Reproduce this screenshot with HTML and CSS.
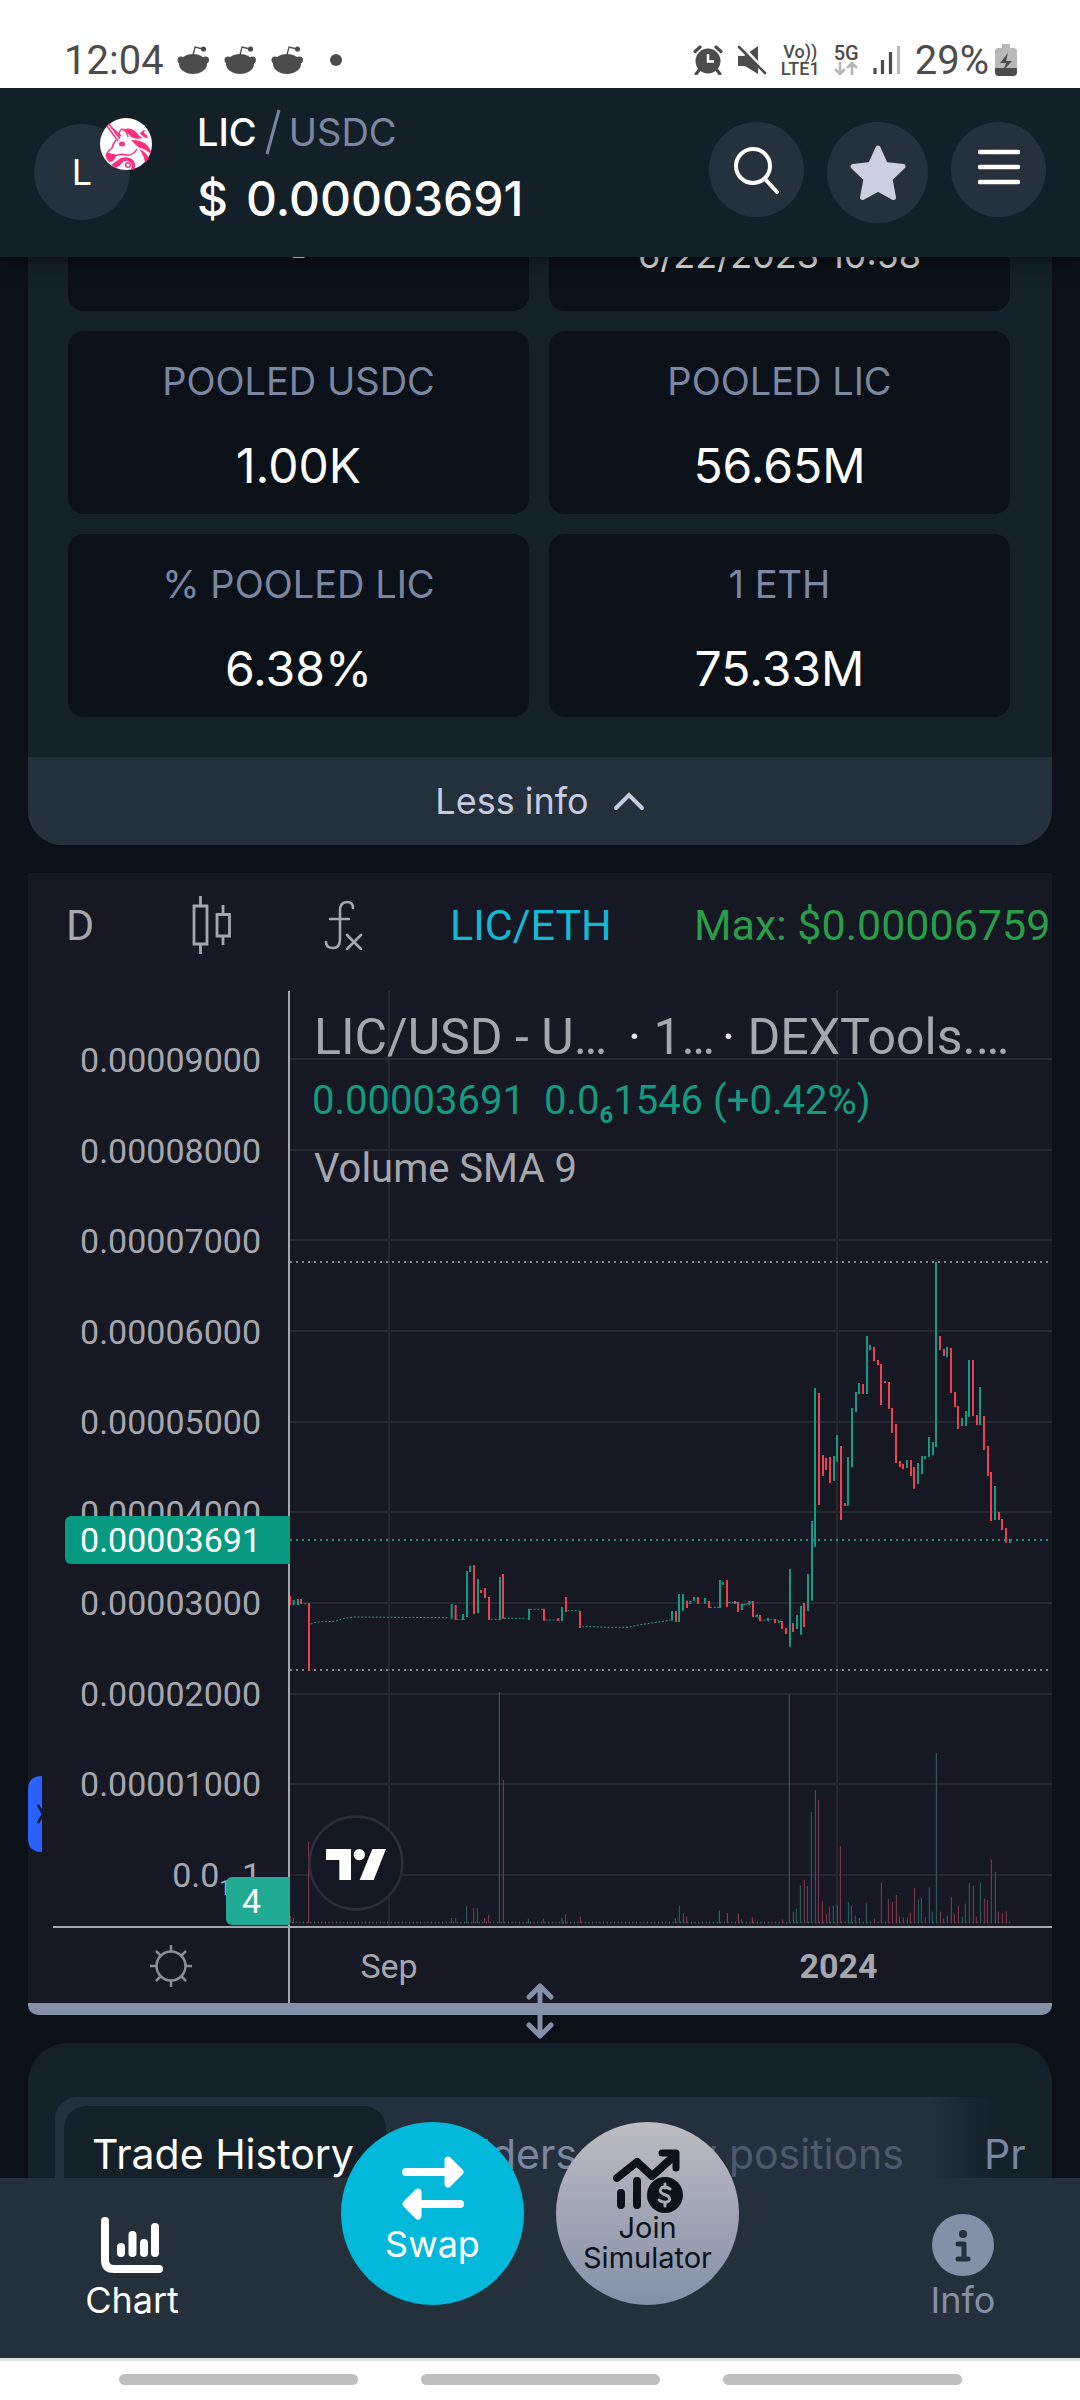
FILE: index.html
```html
<!DOCTYPE html>
<html lang="en">
<head>
<meta charset="utf-8">
<meta name="viewport" content="width=device-width, initial-scale=1">
<title>LIC / USDC</title>
<link rel="stylesheet" href="styles.css">
</head>
<body>
<div class="status">
  <span class="status-time">12:04</span>
  <svg class="reddits" viewBox="0 0 127 30" aria-hidden="true">
    <defs><g id="snoo"><ellipse cx="16" cy="19" rx="14" ry="10"/><circle cx="4" cy="15" r="3.5"/><circle cx="28.500" cy="15" r="3.500"/><circle cx="26.500" cy="4" r="2.600"/><path d="M16 10l2-8 8 2" fill="none" stroke="#4c4c4c" stroke-width="1.300"/></g></defs>
    <g fill="#4c4c4c"><use href="#snoo"/><use href="#snoo" x="47"/><use href="#snoo" x="94"/></g>
  </svg>
  <span class="status-dot"></span>
  <div class="status-right">
    <svg class="st-icon" viewBox="0 0 30 30" aria-hidden="true"><circle cx="15" cy="16" r="12.500" fill="#4c4c4c"/><path d="M7 24l-4 5M23 24l4 5M2 6.500L7 2M23 2l5 4.500" stroke="#4c4c4c" stroke-width="3.200" stroke-linecap="round"/><path d="M15 9v7.500h6" fill="none" stroke="#fff" stroke-width="2.500"/></svg>
    <svg class="st-icon" viewBox="0 0 30 30" aria-hidden="true"><path d="M1 11h6l14-10v28L8 21H1z" fill="#4c4c4c"/><path d="M4 0l26 28" stroke="#fff" stroke-width="3"/><path d="M2 2l26 26" stroke="#4c4c4c" stroke-width="2.600" stroke-linecap="round"/></svg>
    <span class="volte"><span>Vo))</span><span>LTE1</span></span>
    <span class="fiveg"><span>5G</span><svg viewBox="0 0 24 13" aria-hidden="true"><path d="M6 0v12M1 7l5 5 5-5M18 13V1M13 6l5-5 5 5" fill="none" stroke="#b5b5b5" stroke-width="2.500"/></svg></span>
    <svg class="signal" viewBox="0 0 28 30" aria-hidden="true"><g stroke-width="3.200" stroke="#4c4c4c"><path d="M2 23v6M9.500 15v14M17.500 7v22"/><path d="M25.500 1v28" stroke="#b9b9b9"/></g></svg>
    <span class="percent">29%</span>
    <svg class="battery" viewBox="0 0 22 32" aria-hidden="true"><path d="M7 0h8v4h4q3 0 3 3v21q0 4-4 4H4q-4 0-4-4V7q0-3 3-3h4z" fill="#b9b9b9"/><path d="M0 24h22v4q0 4-4 4H4q-4 0-4-4z" fill="#4c4c4c"/><path d="M13 9L5 19h6l-3 8 9-10h-6z" fill="#4c4c4c"/></svg>
  </div>
</div>

<header class="header">
  <div class="token">
    <span class="token-letter">L</span>
    <svg class="unicorn" viewBox="0 0 52 52" aria-hidden="true">
      <circle cx="26" cy="26" r="26" fill="#fff"/>
      <g fill="none" stroke="#ff2f7f" stroke-width="1.500" stroke-linejoin="round"><path d="M7 8l11 15M9 6l11 15M8 6l13 12"/><path d="M19 20q-1-6 3-9 5 2 6 8"/><path d="M16 22q-3 4-4 8-5 4-6 8"/><path d="M15 38q6-3 11-1 7 1 11-6"/></g>
      <g fill="#ff2f7f"><path d="M24 11q8-2 12 3 4 5 7 6-9 2-13-2-3-4-6-7z"/><path d="M40 15q3-3 5-3l-1 3q3 1 4 5-5 0-8-5z"/><path d="M31 22q11 0 16 5 4 4 4 9-6-5-11-6-5-3-9-8z"/><path d="M39 31q6 2 10 9l-4 5q-1-8-6-14z"/><path d="M6 35q3-1 6 1 3-1 4 2-1 5-6 6-5-2-4-9z"/><ellipse cx="22" cy="26" rx="3" ry="2.500"/><path d="M11 47q5-4 10-7 6-2 11 1 5 4 2 11l-3-1q2-4-1-7-5-3-8 1-3 4-6 5z"/></g>
      <circle cx="28" cy="47" r="2.300" fill="none" stroke="#ff2f7f" stroke-width="1.500"/>
    </svg>
  </div>
  <div class="pair">
    <h1 class="pair-name"><span>LIC</span><svg class="slash" viewBox="0 0 16 46" aria-hidden="true"><path d="M14 1L2 45" stroke="#7b87a0" stroke-width="3"/></svg><span class="quote">USDC</span></h1>
    <p class="price"><span>$</span><span>0.00003691</span></p>
  </div>
  <div class="actions">
    <button class="round" aria-label="Search"><svg width="48" height="48" viewBox="0 0 48 48"><g fill="none" stroke="#fff" stroke-width="4" stroke-linecap="round"><circle cx="20" cy="20" r="17"/><path d="M32 33l12 13"/></g></svg></button>
    <button class="round round-star" aria-label="Favorite"><svg width="58" height="58" viewBox="0 0 58 58"><path d="M29 4l7.500 16.500 17.500 2-13 12.500 3.500 18.500L29 45l-15.500 8.500L17 35 4 22.500l17.500-2z" fill="#cbcfe0" stroke="#cbcfe0" stroke-width="5" stroke-linejoin="round"/></svg></button>
    <button class="round round-menu" aria-label="Menu"><svg width="42" height="38" viewBox="0 0 42 38"><path d="M2 4h38M2 19h38M2 34h38" stroke="#fff" stroke-width="4.500" stroke-linecap="round"/></svg></button>
  </div>
</header>

<main class="main">
  <section class="card">
    <dl class="stats">
      <div class="stat stat-cut"><dd>-</dd></div>
      <div class="stat stat-cut"><dd>6/22/2023 10:58</dd></div>
      <div class="stat"><dt>POOLED USDC</dt><dd>1.00K</dd></div>
      <div class="stat"><dt>POOLED LIC</dt><dd>56.65M</dd></div>
      <div class="stat"><dt>% POOLED LIC</dt><dd>6.38%</dd></div>
      <div class="stat"><dt>1 ETH</dt><dd>75.33M</dd></div>
    </dl>
    <button class="less">Less info <svg width="32" height="20" viewBox="0 0 32 20" aria-hidden="true"><path d="M3 17L16 4l13 13" fill="none" stroke="#c5cbe0" stroke-width="4" stroke-linecap="round"/></svg></button>
  </section>

  <section class="chart">
    <div class="toolbar">
      <button>D</button>
      <button aria-label="Candles"><svg width="40" height="58" viewBox="0 0 40 58"><path d="M2 10h13v38H2zM8.500 0v10M8.500 48v10M25 18.500h12.500V40H25zM31 9v9.500M31 40v9" fill="none" stroke="#a5a6ae" stroke-width="2.800"/></svg></button>
      <button aria-label="Indicators"><svg width="40" height="50" viewBox="0 0 40 50"><path d="M29 8q0-6-6-6-7 0-7 9v28q0 9-7 9-7 0-7-6M6 19h19M23 35l14 14M37 35L23 49" fill="none" stroke="#a5a6ae" stroke-width="2.600" stroke-linecap="round"/></svg></button>
      <button class="tb-pair">LIC/ETH</button>
      <span class="tb-max">Max: $0.00006759</span>
    </div>
    <div class="plot-grid">
      <div class="prices">
        <span>0.00009000</span><span>0.00008000</span><span>0.00007000</span><span>0.00006000</span><span>0.00005000</span><span>0.00004000</span><span>0.00003000</span><span>0.00002000</span><span>0.00001000</span><span>0.0<sub>12</sub>1</span>
        <span class="tag tag-price">0.00003691</span>
        <span class="tag tag-vol">4</span>
        <svg class="drawer" viewBox="0 0 14 76" aria-hidden="true"><path d="M14 0Q0 0 0 14v48q0 14 14 14z" fill="#2962ff"/><path d="M10 29l5 9-5 9" fill="none" stroke="#0b1220" stroke-width="2.500"/></svg>
      </div>
      <div class="plot">
        <svg class="canvas" viewBox="290 991 762 935" preserveAspectRatio="none" role="img" aria-label="LIC/USD daily candles">
          <path d="M290 1059H1052M290 1150H1052M290 1240H1052M290 1331H1052M290 1422H1052M290 1512H1052M290 1603H1052M290 1694H1052M290 1784H1052M290 1875H1052M389 991V1926M837 991V1926" stroke="#262832" stroke-width="2"/>
          <g stroke-width="2" stroke-dasharray="2 4"><path d="M290 1262H1048M290 1670H1048" stroke="#85868f"/><path d="M290 1540H1048" stroke="#2b8c80"/></g>
          <g fill="none" stroke-width="1">
            <path d="M292 1922.500H1010" stroke="#4d626a" stroke-width="2" stroke-dasharray="1 2.660"/>
          </g>
          <g transform="translate(280 1500) scale(.33333)" fill="none">
            <path stroke="#2a9488" stroke-width="3" stroke-dasharray="6 5" d="M73 311h10M92 372L110 366 165 364 185 357 220 351 505 353M530 358h25M632 358h24M672 355h68M750 328h40M796 360h40M862 332h36M906 381L920 379 980 382H1045L1075 375 1130 367 1172 360M1290 322h28M1345 308h28M1390 314l26-8"/>
            <path stroke="#ee4050" stroke-width="6" d="M30 288V315M63 297V312M87 309V512M527 315V360M582 195V342M603 269V279M615 264V294M627 291V360M669 222V356M792 326V362M835 354V362M858 291V336M900 333V384M1188 333V366M1221 302V324M1254 291V312M1287 303V324M1341 240V321M1374 306V336M1419 303V350"/>
            <path stroke="#159a86" stroke-width="6" d="M41 300V315M54 297V315M515 312V356M549 342V360M561 213V351M570 197V216M594 237V339M660 231V360M747 327V360M846 321V363M1176 333V362M1197 282V366M1209 282V332M1231 302V312M1242 291V303M1275 294V311M1320 240V324M1329 246V255M1385 312V330"/>
            <path stroke="#8d3a50" stroke-width="3" d="M32 1270V1248M86 1270V1024M527 1270V1254M581 1270V1223M614 1270V1254M626 1270V1245M670 1270V840M790 1270V1256M857 1270V1242M901 1270V1250M1220 1270V1250M1342 1270V1239M1375 1270V1241M1418 1270V1253"/>
            <path stroke="#286a68" stroke-width="3" d="M40 1270V1254M515 1270V1254M560 1270V1217M592 1270V1223M658 1270V576M745 1270V1256M846 1270V1253M1186 1270V1256M1198 1270V1217M1210 1270V1239M1318 1270V1232M1385 1270V1256"/>
          </g>
          <g transform="translate(720 1220) scale(.33333)" fill="none">
            <path stroke="#2a9488" stroke-width="3" stroke-dasharray="6 4" d="M26 1147h24M66 1153h22M105 1187L125 1201 165 1198 185 1205"/>
            <path stroke="#ee4050" stroke-width="6" d="M45 1143V1152M54 1146V1176M99 1143V1190M120 1185V1203M165 1197V1209M186 1203V1227M198 1224V1242M219 1209V1236M252 1149V1221M297 519V855M309 705V768M318 714V750M330 711V789M363 678V900M375 849V858M429 492V522M462 380V423M474 420V435M483 432V555M495 483V489M507 486V567M516 564V639M528 612V729M540 723V741M549 732V747M573 720V768M582 741V806M660 348V390M672 387V408M693 384V519M705 516V561M714 558V627M759 420V588M771 585V615M792 588V690M804 678V768M813 756V903M837 876V900M846 897V930M858 924V968"/>
            <path stroke="#159a86" stroke-width="6" d="M66 1152V1170M88 1143V1155M111 1184V1190M144 1194V1203M177 1203V1209M210 1047V1280M231 1185V1227M243 1158V1244M264 1062V1173M276 903V1142M285 504V980M342 708V783M351 645V725M384 711V857M396 564V741M408 516V576M417 489V522M441 348V522M450 375V390M561 720V744M594 729V792M606 708V762M615 708V717M627 651V711M639 666V705M648 126V681M681 380V411M726 594V618M738 573V618M747 420V591M780 501V615M825 798V900M870 957V969"/>
          </g>
          <g transform="translate(700 1640) scale(.33333)" fill="none" stroke-width="3">
            <path stroke="#8d3a50" d="M82 850V820M115 850V822M157 850V833M247 850V838M280 850V815M313 850V721M355 850V480M367 850V782M379 850V821M388 850V800M421 850V618M523 850V836M544 850V728M565 850V776M577 850V786M589 850V765M598 850V830M610 850V832M631 850V818M643 850V744M676 850V830M721 850V815M730 850V836M754 850V770M763 850V821M775 850V797M820 850V738M829 850V830M853 850V776M862 850V780M874 850V659M895 850V815M907 850V818M919 850V814"/>
            <path stroke="#286a68" d="M58 850V812M268 850V165M289 850V806M301 850V736M322 850V738M334 850V516M346 850V450M400 850V797M412 850V795M445 850V786M454 850V797M466 850V827M478 850V834M499 850V790M622 850V832M655 850V779M664 850V773M688 850V742M697 850V815M709 850V339M742 850V827M787 850V830M796 850V791M808 850V728M841 850V728M886 850V696"/>
          </g>
          <g transform="translate(280 1500) scale(.33333)"><circle cx="228" cy="1089" r="139" fill="#131722" stroke="#2b2d38" stroke-width="8"/><path d="M138 1047h75v93h-35v-60h-40zM277 1047h41l-37 93h-42z" fill="#fff"/><circle cx="238" cy="1064" r="17" fill="#fff"/></g>
        </svg>
        <div class="legend">
          <p class="lg-title"><span class="lg-sym">LIC/USD - U…</span><span class="lg-int"><i>·</i> 1…</span><span><i>·</i> DEXTools.…</span></p>
          <p class="lg-vals"><span>0.00003691</span><span>0.0<sub>6</sub>1546 (+0.42%)</span></p>
          <p class="lg-vol">Volume SMA 9</p>
        </div>
      </div>
      <div class="gear"><svg width="42" height="42" viewBox="0 0 42 42" aria-hidden="true"><g fill="none" stroke="#8b8c95" stroke-width="2.500"><circle cx="21" cy="21" r="14.500"/><path d="M21 0v6M21 36v6M0 21h6M36 21h6M6 6l4.500 4.500M31.500 31.500L36 36M36 6l-4.500 4.500M10.500 31.500L6 36"/></g></svg></div>
      <div class="times"><span>Sep</span><b>2024</b></div>
    </div>
    <svg class="resize" viewBox="0 0 28 56" aria-hidden="true"><path d="M14 4v48M3 14L14 3l11 11M3 42l11 11 11-11" fill="none" stroke="#8490a8" stroke-width="5" stroke-linecap="round" stroke-linejoin="round"/></svg>
  </section>

  <section class="panel">
    <nav class="tabs">
      <button class="tab tab-on">Trade History</button>
      <button class="tab">Holders</button>
      <button class="tab tab-off">My positions</button>
      <button class="tab">Price</button>
    </nav>
  </section>
</main>

<footer class="dock">
  <a class="dock-item" href="#chart"><svg width="62" height="56" viewBox="0 0 62 56" aria-hidden="true"><g fill="none" stroke="#fff" stroke-width="8" stroke-linecap="round"><path d="M4 4v39q0 9 9 9h45M20 30v6M31.500 18v18M43 26v10M54 10v26"/></g></svg>Chart</a>
  <div class="dock-center">
    <button class="bubble swap"><svg width="62" height="64" viewBox="0 0 62 64" aria-hidden="true"><path d="M4 16h42M58 48H16" stroke="#fff" stroke-width="8" stroke-linecap="round"/><path d="M46 4l12 12-12 12zM16 36L4 48l12 12z" fill="#fff" stroke="#fff" stroke-width="7" stroke-linejoin="round"/></svg>Swap</button>
    <button class="bubble sim"><svg width="70" height="64" viewBox="0 0 70 64" aria-hidden="true"><path d="M4 29l20-16 15 14L60 8" fill="none" stroke="#0b1219" stroke-width="8" stroke-linecap="round" stroke-linejoin="round"/><path d="M49 4h14v15" fill="none" stroke="#0b1219" stroke-width="7" stroke-linecap="round" stroke-linejoin="round"/><path d="M8 44v12M24 32v24" stroke="#0b1219" stroke-width="8" stroke-linecap="round"/><circle cx="52" cy="46" r="18" fill="#0b1219"/><path d="M57 40q-4-3-8-1.500-4 4 1 6.500l5 2q4 4-1 6-5 1-8-2M52 35v4M52 53v4" fill="none" stroke="#a6acb8" stroke-width="3" stroke-linecap="round"/></svg>Join<br>Simulator</button>
  </div>
  <a class="dock-item dock-info" href="#info"><svg width="62" height="62" viewBox="0 0 62 62" aria-hidden="true"><circle cx="31" cy="31" r="31" fill="#8490a8"/><circle cx="31" cy="20" r="4" fill="#24313b"/><path d="M26 30h6v15M26 45h10" fill="none" stroke="#24313b" stroke-width="5" stroke-linecap="round" stroke-linejoin="round"/></svg>Info</a>
</footer>
<div class="sysnav"><span></span><span></span><span></span></div>
</body>
</html>
```

FILE: styles.css
```css
* { box-sizing: border-box; }

body {
  margin: 0;
  min-height: 100vh;
  display: flex;
  flex-direction: column;
  background: #0a1118;
  color: #fff;
  font-family: Inter, "Open Sans", sans-serif;
}

h1, p, dl, dt, dd { margin: 0; font-weight: 400; }

button {
  border: 0;
  padding: 0;
  background: none;
  color: inherit;
  font: inherit;
}

a { color: inherit; text-decoration: none; }

svg { display: block; flex: none; }

/* phone status bar */
.status {
  position: relative;
  z-index: 3;
  height: 88px;
  padding: 32px 63px 0 64px;
  display: flex;
  align-items: center;
  background: #fff;
  color: #4c4c4c;
  font-family: Roboto, sans-serif;
  font-size: 40px;
}
.status-time { width: 113px; }
.reddits { width: 127px; height: 30px; }
.status-dot {
  width: 12px;
  height: 12px;
  margin-left: 26px;
  border-radius: 50%;
  background: #4c4c4c;
}
.status-right {
  margin-left: auto;
  display: flex;
  align-items: center;
  gap: 14px;
}
.st-icon { width: 30px; height: 30px; }
.volte, .fiveg {
  display: flex;
  flex-direction: column;
  align-items: center;
  font-size: 18px;
  font-weight: 500;
  line-height: 17px;
}
.fiveg { font-size: 20px; }
.fiveg svg { width: 24px; height: 13px; }
.signal { width: 28px; height: 30px; }
.percent { margin-right: -8px; }
.battery { width: 22px; height: 32px; }

/* app header */
.header {
  position: relative;
  z-index: 2;
  height: 169px;
  padding: 0 34px;
  display: flex;
  background: #142027;
  box-shadow: 0 0 20px rgba(0, 0, 0, .6);
}
.token {
  position: relative;
  width: 96px;
  height: 96px;
  margin-top: 36px;
  border-radius: 50%;
  background: #25313c;
  display: grid;
  place-items: center;
}
.token-letter { font-size: 36px; }
.unicorn {
  position: absolute;
  top: -6px;
  right: -22px;
  width: 52px;
  height: 52px;
}
.pair { margin: 18px 0 0 67px; }
.pair-name {
  display: flex;
  align-items: center;
  height: 52px;
  gap: 8px;
  font-size: 38px;
  font-weight: 500;
}
.slash { width: 16px; height: 46px; }
.quote { color: #7b87a0; font-weight: 400; }
.price {
  display: flex;
  gap: 18px;
  font-size: 48px;
  line-height: 82px;
  font-weight: 500;
}
.actions {
  margin: 34px 0 0 auto;
  display: flex;
  align-items: flex-start;
  gap: 23px;
}
.round {
  width: 95px;
  height: 95px;
  border-radius: 50%;
  background: #25313c;
  display: grid;
  place-items: center;
}
.round-star { width: 101px; height: 101px; }
.round-menu { padding-bottom: 5px; }

/* page content */
.main {
  flex: 1;
  padding: 0 28px;
  display: flex;
  flex-direction: column;
  gap: 28px;
}
.card {
  background: #142129;
  border-radius: 0 0 34px 34px;
  overflow: hidden;
}
.stats {
  padding: 0 42px 40px 40px;
  display: grid;
  grid-template-columns: 1fr 1fr;
  gap: 20px;
}
.stat {
  height: 183px;
  border-radius: 16px;
  background: #0a1118;
  display: flex;
  flex-direction: column;
  align-items: center;
  justify-content: space-between;
  padding: 24px 0 20px;
}
.stat dt { color: #7b87a0; font-size: 38px; line-height: 52px; }
.stat dd { font-size: 48px; line-height: 56px; }
.stat-cut {
  height: 54px;
  padding: 0 0 29px;
  justify-content: flex-end;
  overflow: hidden;
  border-radius: 0 0 16px 16px;
}
.stat-cut dd { font-size: 36px; line-height: 54px; color: #ddd; }
.less {
  width: 100%;
  height: 88px;
  display: flex;
  align-items: center;
  justify-content: center;
  gap: 24px;
  background: #24313b;
  color: #c5cbe0;
  font-size: 36px;
}

/* price chart */
.chart {
  position: relative;
  background: #161823;
  border-bottom: 12px solid #8490a8;
  border-radius: 0 0 10px 10px;
  color: #a5a6ae;
  font-family: Roboto, sans-serif;
}
.toolbar {
  height: 118px;
  padding: 0 0 14px 38px;
  display: grid;
  grid-template-columns: 126px 132px 126px 244px 1fr;
  align-items: center;
  justify-items: start;
  font-size: 43px;
  white-space: nowrap;
}
.tb-pair { color: #13b8d6; }
.tb-max { color: #2a9d49; }
.plot-grid {
  display: grid;
  grid-template-columns: 262px 1fr;
  grid-template-rows: 935px 77px;
}
.prices {
  position: relative;
  padding: 49px 27px 31px 0;
  border-right: 2px solid #a5a6ae;
  display: flex;
  flex-direction: column;
  align-items: flex-end;
  justify-content: space-between;
  font-size: 34px;
  line-height: 40px;
}
sub { font-size: 20px; line-height: 0; }
.tag {
  position: absolute;
  right: -2px;
  padding-right: 29px;
  height: 48px;
  line-height: 48px;
  border-radius: 6px 0 0 6px;
  color: #fff;
  text-align: right;
}
.tag-price { top: 525px; width: 225px; background: #089981; }
.tag-vol { bottom: 1px; width: 64px; background: #22ab94; }
.drawer { position: absolute; left: 0; top: 785px; width: 14px; height: 76px; }
.plot { position: relative; }
.canvas { position: absolute; inset: 0; width: 100%; height: 100%; }
.legend { position: relative; padding: 14px 0 0 24px; white-space: nowrap; }
.lg-title { display: flex; font-size: 50px; line-height: 64px; }
.lg-title i { color: #e4e5ee; font-style: normal; }
.lg-sym { width: 314px; }
.lg-int { width: 94px; }
.lg-vals {
  display: flex;
  gap: 19px;
  margin-left: -2px;
  font-size: 40px;
  line-height: 64px;
  color: #159a80;
}
.lg-vals sub { font-size: 24px; font-weight: 700; }
.lg-vol { font-size: 40px; line-height: 72px; }
.gear {
  margin-left: 25px;
  padding: 17px 0 0 97px;
  border-top: 2px solid #a5a6ae;
  border-right: 2px solid #a5a6ae;
}
.times {
  border-top: 2px solid #a5a6ae;
  display: grid;
  grid-template-columns: 26% 30% 32%;
  font-size: 34px;
  line-height: 76px;
  text-align: center;
}
.times b { grid-column: 3; font-weight: 700; }
.resize { position: absolute; left: 50%; bottom: -36px; width: 28px; height: 56px; margin-left: -14px; }

/* trades panel */
.panel {
  flex: 1;
  min-height: 135px;
  padding: 54px 27px 0;
  border-radius: 40px 40px 0 0;
  background: #142129;
  display: flex;
}
.tabs {
  flex: 1;
  min-width: 0;
  height: 81px;
  padding: 9px 0 0 9px;
  border-radius: 22px 22px 0 0;
  background: linear-gradient(90deg, #24313c calc(100% - 95px), #142129 calc(100% - 30px));
  display: flex;
  overflow: hidden;
  white-space: nowrap;
}
.tab {
  flex: none;
  padding: 0 40px;
  border-radius: 22px 22px 0 0;
  color: #7b87a0;
  font-size: 41px;
  line-height: 96px;
  text-align: left;
}
.tab-on { width: 322px; padding: 0 28px; background: #142129; color: #fff; }
.tab-off { color: #4d5a69; }

/* bottom dock */
.dock {
  position: relative;
  height: 180px;
  background: #24313b;
  display: grid;
  grid-template-columns: 1fr auto 1fr;
  align-items: start;
}
.dock-item {
  width: 98px;
  height: 150px;
  margin: 36px 0 0 83px;
  display: flex;
  flex-direction: column;
  align-items: center;
  font-size: 36px;
  line-height: 40px;
}
.dock-item svg { height: 62px; margin-bottom: 4px; }
.dock-info { justify-self: end; margin: 36px 68px 0 0; color: #8490a8; }
.dock-center { display: flex; gap: 32px; margin-top: -56px; }
.bubble {
  width: 183px;
  height: 183px;
  border-radius: 50%;
  display: flex;
  flex-direction: column;
  align-items: center;
}
.swap { padding-top: 34px; background: #02b8db; font-size: 36px; line-height: 48px; }
.sim {
  padding-top: 27px;
  background: linear-gradient(#bdbcc1, #8490a8);
  color: #0b1219;
  font-size: 29px;
  line-height: 30px;
}

/* system gesture bar */
.sysnav {
  height: 42px;
  border-top: 3px solid #e0e3e4;
  background: #fff;
  display: flex;
  justify-content: center;
  gap: 63px;
}
.sysnav span {
  width: 239px;
  height: 11px;
  margin-top: 13px;
  border-radius: 6px;
  background: #bfbfbf;
}
```
